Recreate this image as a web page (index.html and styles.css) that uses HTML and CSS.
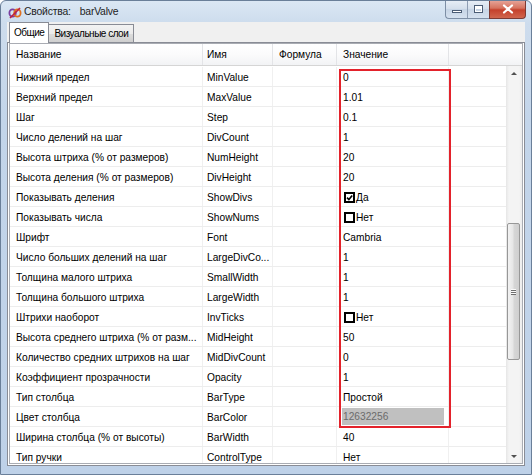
FILE: index.html
```html
<!DOCTYPE html>
<html lang="ru">
<head>
<meta charset="utf-8">
<title>Свойства: barValve</title>
<link rel="stylesheet" href="styles.css">
</head>
<body>
<div class="window">
  <div class="titlebar">
    <svg class="appicon" width="14" height="13" viewBox="0 0 14 13">
      <ellipse cx="4.6" cy="7" rx="3.2" ry="3.7" fill="none" stroke="#7a3fa0" stroke-width="1.8"/>
      <ellipse cx="9.4" cy="7" rx="3.2" ry="3.7" fill="none" stroke="#e07020" stroke-width="1.8"/>
      <path d="M2 12 L12 2" stroke="#c02040" stroke-width="1.6"/>
    </svg>
    <span class="title">Свойства:</span>
    <span class="title-name">barValve</span>
    <div class="caption">
      <div class="btn-group">
        <span class="btn btn-min"><span class="min-glyph"></span></span>
        <span class="btn btn-max"><span class="max-glyph"></span></span>
      </div>
      <span class="btn btn-close">
        <svg width="12" height="10" viewBox="0 0 12 10"><path d="M2 1.5 L10 8.5 M10 1.5 L2 8.5" stroke="#fff" stroke-width="2.2" stroke-linecap="round"/></svg>
      </span>
    </div>
  </div>
  <div class="client">
    <div class="tabs">
      <div class="tab tab-active">Общие</div>
      <div class="tab">Визуальные слои</div>
    </div>
    <div class="panel">
      <div class="grid">
        <div class="grid-head">
          <div class="cell c1">Название</div>
          <div class="cell c2">Имя</div>
          <div class="cell c3">Формула</div>
          <div class="cell c4">Значение</div>
          <div class="cell c5"></div>
        </div>
        <div class="grid-body">
          <div class="rows">
            <div class="row"><div class="cell c1">Нижний предел</div><div class="cell c2">MinValue</div><div class="cell c3"></div><div class="cell c4">0</div><div class="cell c5"></div></div>
            <div class="row"><div class="cell c1">Верхний предел</div><div class="cell c2">MaxValue</div><div class="cell c3"></div><div class="cell c4">1.01</div><div class="cell c5"></div></div>
            <div class="row"><div class="cell c1">Шаг</div><div class="cell c2">Step</div><div class="cell c3"></div><div class="cell c4">0.1</div><div class="cell c5"></div></div>
            <div class="row"><div class="cell c1">Число делений на шаг</div><div class="cell c2">DivCount</div><div class="cell c3"></div><div class="cell c4">1</div><div class="cell c5"></div></div>
            <div class="row"><div class="cell c1">Высота штриха (% от размеров)</div><div class="cell c2">NumHeight</div><div class="cell c3"></div><div class="cell c4">20</div><div class="cell c5"></div></div>
            <div class="row"><div class="cell c1">Высота деления (% от размеров)</div><div class="cell c2">DivHeight</div><div class="cell c3"></div><div class="cell c4">20</div><div class="cell c5"></div></div>
            <div class="row"><div class="cell c1">Показывать деления</div><div class="cell c2">ShowDivs</div><div class="cell c3"></div><div class="cell c4"><span class="cb"><svg width="11" height="11" viewBox="0 0 11 11"><rect x="1" y="1" width="9" height="9" fill="#fff" stroke="#000" stroke-width="2"/><path d="M3 5.6 L4.9 7.5 L8.2 3.4" fill="none" stroke="#000" stroke-width="1.6"/></svg></span>Да</div><div class="cell c5"></div></div>
            <div class="row"><div class="cell c1">Показывать числа</div><div class="cell c2">ShowNums</div><div class="cell c3"></div><div class="cell c4"><span class="cb"><svg width="11" height="11" viewBox="0 0 11 11"><rect x="1" y="1" width="9" height="9" fill="#fff" stroke="#000" stroke-width="2"/></svg></span>Нет</div><div class="cell c5"></div></div>
            <div class="row"><div class="cell c1">Шрифт</div><div class="cell c2">Font</div><div class="cell c3"></div><div class="cell c4">Cambria</div><div class="cell c5"></div></div>
            <div class="row"><div class="cell c1">Число больших делений на шаг</div><div class="cell c2">LargeDivCo...</div><div class="cell c3"></div><div class="cell c4">1</div><div class="cell c5"></div></div>
            <div class="row"><div class="cell c1">Толщина малого штриха</div><div class="cell c2">SmallWidth</div><div class="cell c3"></div><div class="cell c4">1</div><div class="cell c5"></div></div>
            <div class="row"><div class="cell c1">Толщина большого штриха</div><div class="cell c2">LargeWidth</div><div class="cell c3"></div><div class="cell c4">1</div><div class="cell c5"></div></div>
            <div class="row"><div class="cell c1">Штрихи наоборот</div><div class="cell c2">InvTicks</div><div class="cell c3"></div><div class="cell c4"><span class="cb"><svg width="11" height="11" viewBox="0 0 11 11"><rect x="1" y="1" width="9" height="9" fill="#fff" stroke="#000" stroke-width="2"/></svg></span>Нет</div><div class="cell c5"></div></div>
            <div class="row"><div class="cell c1">Высота среднего штриха (% от разм...</div><div class="cell c2">MidHeight</div><div class="cell c3"></div><div class="cell c4">50</div><div class="cell c5"></div></div>
            <div class="row"><div class="cell c1">Количество средних штрихов на шаг</div><div class="cell c2">MidDivCount</div><div class="cell c3"></div><div class="cell c4">0</div><div class="cell c5"></div></div>
            <div class="row"><div class="cell c1">Коэффициент прозрачности</div><div class="cell c2">Opacity</div><div class="cell c3"></div><div class="cell c4">1</div><div class="cell c5"></div></div>
            <div class="row"><div class="cell c1">Тип столбца</div><div class="cell c2">BarType</div><div class="cell c3"></div><div class="cell c4">Простой</div><div class="cell c5"></div></div>
            <div class="row"><div class="cell c1">Цвет столбца</div><div class="cell c2">BarColor</div><div class="cell c3"></div><div class="cell c4 color-cell"><span class="swatch">12632256</span></div><div class="cell c5"></div></div>
            <div class="row"><div class="cell c1">Ширина столбца (% от высоты)</div><div class="cell c2">BarWidth</div><div class="cell c3"></div><div class="cell c4">40</div><div class="cell c5"></div></div>
            <div class="row"><div class="cell c1">Тип ручки</div><div class="cell c2">ControlType</div><div class="cell c3"></div><div class="cell c4">Нет</div><div class="cell c5"></div></div>
          </div>
          <div class="vscroll">
            <div class="sb-arrow sb-up"></div>
            <div class="sb-track">
              <div class="sb-thumb"><span class="grip"></span></div>
            </div>
            <div class="sb-arrow sb-down"></div>
          </div>
        </div>
        <div class="highlight"></div>
      </div>
    </div>
  </div>
</div>
</body>
</html>
```

FILE: styles.css
```css
html, body {
  margin: 0;
  padding: 0;
}
body {
  width: 532px;
  height: 475px;
  overflow: hidden;
  background: #ffffff;
  font-family: "Liberation Sans", Arial, sans-serif;
  font-size: 10.2px;
  color: #000;
}
.window {
  width: 532px;
  height: 475px;
  box-sizing: border-box;
  border: 1px solid #6a7f99;
  border-radius: 6px 6px 0 0;
  background: linear-gradient(#dbe7f4 0px, #cddced 22px, #c3d5ea 120px, #bed1e8 475px);
  display: flex;
  flex-direction: column;
  overflow: hidden;
}
.titlebar {
  height: 21px;
  display: flex;
  align-items: center;
  padding-left: 7px;
  font-family: "Liberation Sans", Arial, sans-serif;
  font-size: 10.4px;
  letter-spacing: -0.2px;
  color: #1e1e1e;
}
.appicon {
  margin-right: 2px;
  margin-top: 1px;
}
.title {
  margin-right: 9px;
}
.caption {
  margin-left: auto;
  align-self: flex-start;
  display: flex;
  margin-right: 5px;
  margin-top: -1px;
}
.btn-group {
  display: flex;
  height: 19px;
  border: 1px solid #7d8ea5;
  border-top: none;
  border-right: none;
  border-radius: 0 0 0 4px;
  background: linear-gradient(#e9eff7, #d3deeb 50%, #c6d4e5 51%, #d5e1ef);
  box-sizing: border-box;
}
.btn {
  display: flex;
  align-items: center;
  justify-content: center;
  box-sizing: border-box;
}
.btn-min {
  width: 22px;
  border-right: 1px solid #8e9db3;
}
.btn-max {
  width: 21px;
}
.min-glyph {
  width: 10px;
  height: 3px;
  background: #fff;
  border: 1px solid #4b5c75;
  margin-top: 5px;
  box-sizing: border-box;
}
.max-glyph {
  width: 9px;
  height: 8px;
  border: 1px solid #4b5c75;
  box-shadow: inset 0 0 0 1px #fff, inset 0 2px 0 1px #fff;
  box-sizing: border-box;
}
.btn-close {
  width: 37px;
  height: 19px;
  border: 1px solid #7d3a33;
  border-top: none;
  border-radius: 0 0 4px 0;
  background: linear-gradient(#e8a89c, #d6735f 45%, #c5412c 55%, #d0654d);
}
.client {
  margin: 0 6px;
  height: 444px;
  background: #f0f0f0;
  display: flex;
  flex-direction: column;
}
.tabs {
  height: 20px;
  display: flex;
  align-items: flex-end;
  padding-left: 2px;
  position: relative;
  z-index: 2;
  font-size: 10px;
  letter-spacing: -0.5px;
}
.tab {
  box-sizing: border-box;
  height: 18px;
  padding: 0 5px;
  border: 1px solid #898c95;
  border-bottom: none;
  border-left: none;
  background: linear-gradient(#f3f3f3, #ebebeb 50%, #dddddd 51%, #cfcfcf);
  line-height: 17px;
  color: #000;
}
.tab-active {
  height: 21px;
  margin-bottom: -1px;
  border-left: 1px solid #898c95;
  background: #ffffff;
  padding: 0 4px 0 4px;
  line-height: 19px;
}
.panel {
  flex: 1;
  border: 1px solid #898c95;
  background: #ffffff;
  padding: 0 1px 1px 1px;
  display: flex;
  min-height: 0;
}
.grid {
  flex: 1;
  position: relative;
  border: 1px solid #a9acb3;
  display: flex;
  flex-direction: column;
  overflow: hidden;
  background: #fff;
  min-height: 0;
}
.grid-head {
  height: 22px;
  box-sizing: border-box;
  display: flex;
  border-bottom: 1px solid #d5d5d5;
  background: linear-gradient(#ffffff, #fbfbfc 50%, #f2f3f5);
  flex: none;
}
.grid-head .cell {
  line-height: 21px;
  border-right: 1px solid #e3e4e7;
}
.cell {
  box-sizing: border-box;
  white-space: nowrap;
  overflow: hidden;
  flex: none;
}
.c1 { width: 193px; padding-left: 6px; }
.c2 { width: 70px; padding-left: 4px; }
.c3 { width: 64px; padding-left: 6px; }
.c4 { width: 112px; padding-left: 6px; }
.c5 { flex: 1; }
.grid-head .c5 { border-right: none; }
.grid-body {
  flex: 1;
  display: flex;
  min-height: 0;
}
.rows {
  flex: 1;
  padding-top: 1px;
  overflow: hidden;
}
.row {
  height: 20px;
  box-sizing: border-box;
  display: flex;
  border-bottom: 1px solid #ededed;
}
.row .cell {
  border-right: 1px solid #f0f0f0;
  display: flex;
  align-items: center;
  padding-top: 1px;
}
.row .c5 { border-right: none; }
.cb {
  display: inline-flex;
  width: 11px;
  height: 11px;
  margin-right: 1px;
  margin-left: 1px;
}
.color-cell {
  padding-right: 4px;
  padding-left: 5px;
}
.swatch {
  display: block;
  flex: 1;
  background: #c0c0c0;
  color: #6b6b6b;
  line-height: 17px;
  padding-left: 1px;
  margin-bottom: 1px;
}
.vscroll {
  width: 16px;
  flex: none;
  display: flex;
  flex-direction: column;
  background: linear-gradient(to right, #e6e6e6, #f4f4f4 3px, #f4f4f4 13px, #ececec);
}
.sb-arrow {
  height: 17px;
  flex: none;
  display: flex;
  align-items: center;
  justify-content: center;
}
.sb-up::before, .sb-down::before {
  content: "";
  width: 0;
  height: 0;
  border-left: 3px solid transparent;
  border-right: 3px solid transparent;
}
.sb-up::before {
  border-bottom: 3px solid #505050;
  margin-top: -3px;
}
.sb-down::before {
  border-top: 3px solid #505050;
  margin-top: 3px;
}
.sb-track {
  flex: 1;
  padding-top: 140px;
  padding-left: 1px;
  padding-right: 2px;
}
.sb-thumb {
  height: 137px;
  box-sizing: border-box;
  border: 1px solid #979797;
  border-radius: 2px;
  background: linear-gradient(to right, #f2f2f2, #e6e6e6 45%, #d6d6d6 55%, #cfcfcf);
  display: flex;
  align-items: center;
  justify-content: center;
}
.grip {
  width: 5px;
  height: 6px;
  background: repeating-linear-gradient(#fafafa 0 1px, #6f6f6f 1px 2px);
}
.highlight {
  position: absolute;
  left: 329px;
  top: 25px;
  width: 112px;
  height: 359px;
  box-sizing: border-box;
  border: 2px solid #e3222b;
  pointer-events: none;
}
```
